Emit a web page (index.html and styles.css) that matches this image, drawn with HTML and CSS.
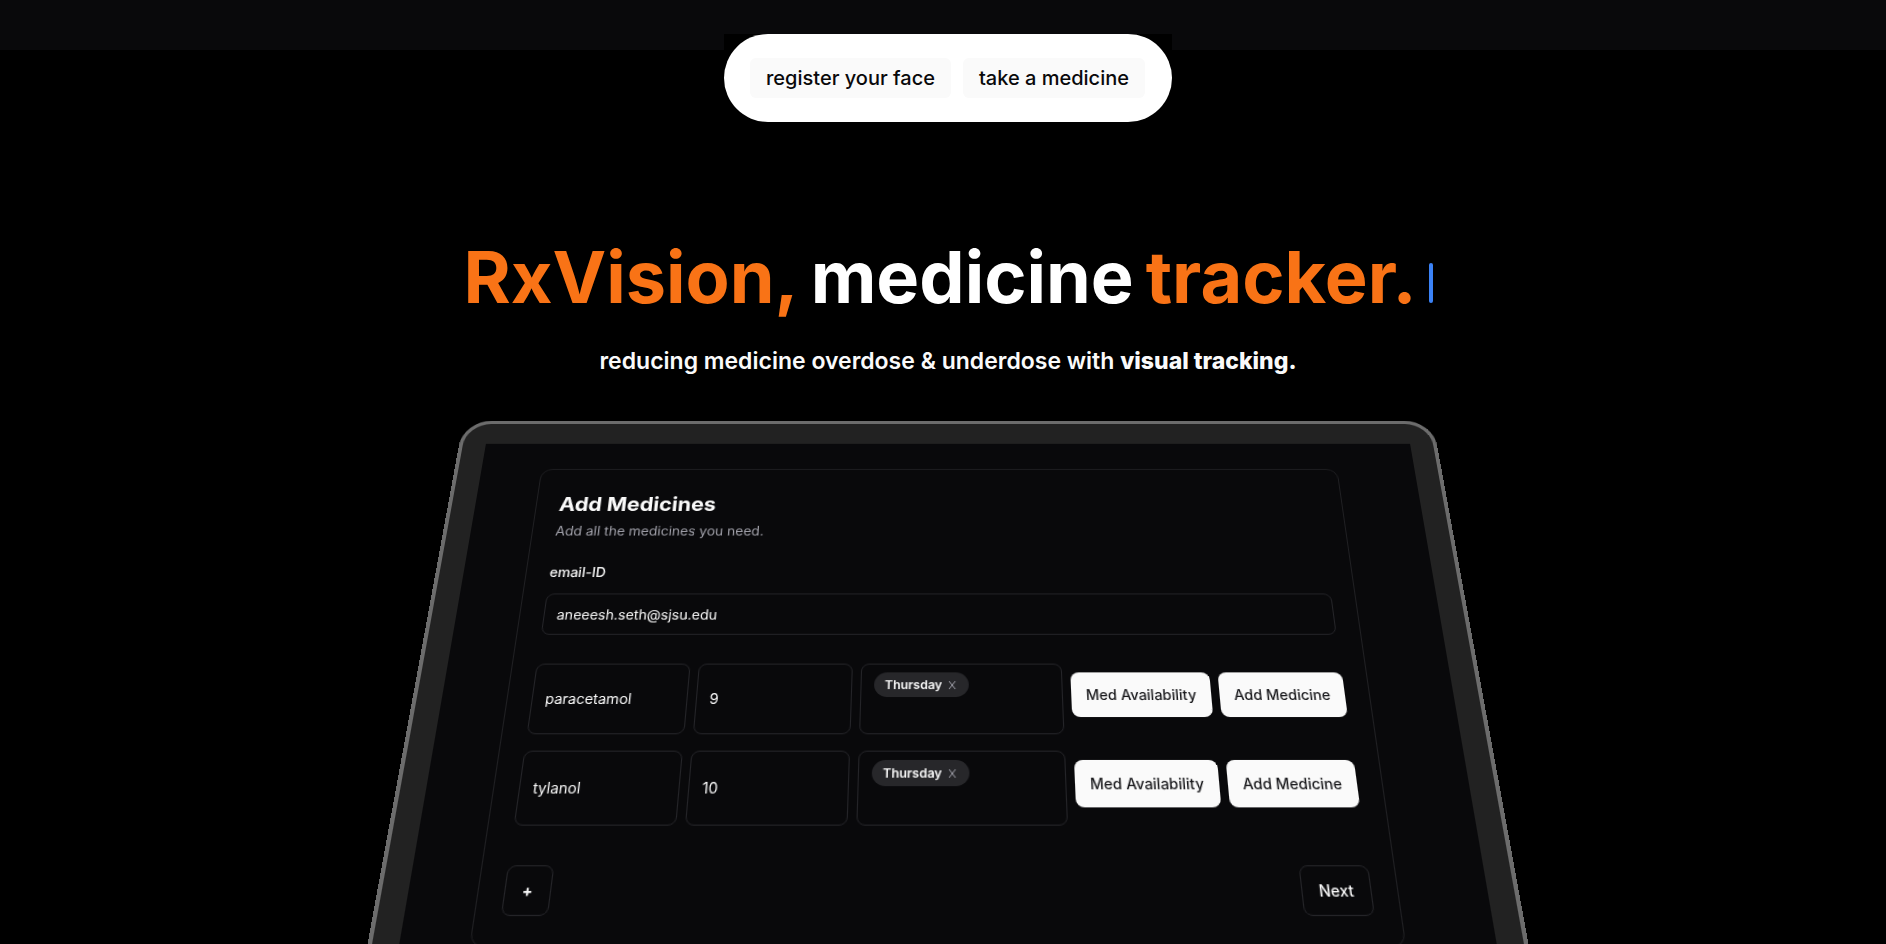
FILE: index.html
```html
<!DOCTYPE html>
<html lang="en">
<head>
  <meta charset="utf-8">
  <meta name="viewport" content="width=device-width, initial-scale=1">
  <title>RxVision</title>
  <link rel="stylesheet" href="styles.css">
</head>
<body>
  <main class="page">
    <header class="topbar">
      <nav class="nav-box" aria-label="Main">
        <div class="nav-pill">
          <button class="nav-button" type="button">register your face</button>
          <button class="nav-button" type="button">take a medicine</button>
        </div>
      </nav>
    </header>

    <section class="hero">
      <h1 class="headline"><span class="accent">RxVision,</span> <span>medicine</span> <span class="accent">tracker.</span><span class="cursor"></span></h1>
      <p class="tagline">reducing medicine overdose &amp; underdose with <strong>visual tracking.</strong></p>
    </section>

    <section class="stage">
      <div class="tablet">
        <div class="screen">
          <form class="card">
            <h2 class="card-title">Add Medicines</h2>
            <p class="card-text">Add all the medicines you need.</p>
            <label class="label" for="email">email-ID</label>
            <input class="field email" id="email" type="text" value="aneeesh.seth@sjsu.edu">
            <div class="rows">
              <div class="row">
                <input class="field" type="text" aria-label="Medicine" value="paracetamol">
                <input class="field" type="text" aria-label="Quantity" value="9">
                <div class="field days"><span class="tag">Thursday<button class="remove" type="button" aria-label="Remove Thursday"><svg viewBox="0 0 12 12" width="12" height="12"><path d="M3 2l6 8M9 2l-6 8"/></svg></button></span></div>
                <button class="solid" type="button">Med Availability</button>
                <button class="solid" type="button">Add Medicine</button>
              </div>
              <div class="row">
                <input class="field" type="text" aria-label="Medicine" value="tylanol">
                <input class="field" type="text" aria-label="Quantity" value="10">
                <div class="field days"><span class="tag">Thursday<button class="remove" type="button" aria-label="Remove Thursday"><svg viewBox="0 0 12 12" width="12" height="12"><path d="M3 2l6 8M9 2l-6 8"/></svg></button></span></div>
                <button class="solid" type="button">Med Availability</button>
                <button class="solid" type="button">Add Medicine</button>
              </div>
            </div>
            <div class="actions">
              <button class="outline plus" type="button">+</button>
              <button class="outline" type="button">Next</button>
            </div>
          </form>
        </div>
      </div>
    </section>
  </main>
</body>
</html>
```
FILE: styles.css
```css
* {
  box-sizing: border-box;
}

body {
  margin: 0;
  background: #000;
  color: #fafafa;
  font-family: Inter, "Liberation Sans", sans-serif;
}

button,
input {
  font: inherit;
  color: inherit;
}

.page {
  height: 100vh;
  overflow: hidden;
}

.topbar,
.hero,
.stage {
  padding-left: 10px;
}

.topbar {
  display: flex;
  justify-content: center;
  height: 122px;
  padding-top: 34px;
  background: linear-gradient(#09090b 50px, #000 50px);
}

.nav-box {
  background: #000;
}

.nav-pill {
  display: flex;
  gap: 12px;
  padding: 24px 27px 24px 26px;
  border-radius: 44px;
  background: #fff;
}

.nav-button {
  height: 40px;
  padding: 0 16px;
  border: 0;
  border-radius: 6px;
  background: #fafafa;
  color: #09090b;
  font-size: 20px;
  font-weight: 500;
  line-height: 28px;
}

.hero {
  display: flex;
  flex-direction: column;
  align-items: center;
  height: 268px;
  padding-top: 119px;
  text-align: center;
}

.headline {
  display: flex;
  align-items: baseline;
  gap: 12px;
  margin: 0;
  color: #fff;
  font-size: 72px;
  font-weight: 700;
  line-height: 72px;
}

.headline .accent {
  color: #f97316;
}

.cursor {
  width: 4px;
  height: 40px;
  border-radius: 2px;
  background: #3b82f6;
}

.tagline {
  margin: 32px 0 0;
  font-size: 23px;
  font-weight: 600;
  line-height: 32px;
}

.tagline strong {
  font-weight: 800;
}

.stage {
  perspective: 1000px;
  perspective-origin: calc(50% + 5px) 291px;
}

.tablet {
  width: 100%;
  max-width: 1024px;
  height: 640px;
  margin: 0 auto;
  padding: 24px;
  border: 4px solid #6c6c6c;
  border-radius: 30px;
  background: #222;
  transform: rotateX(19deg) scale(1.05);
}

.screen {
  height: 100%;
  padding: 30px 80px 0 62px;
  background: #09090b;
}

.card {
  display: flex;
  flex-direction: column;
  padding: 24px 23px 26px;
  border: 1px solid #202023;
  border-radius: 12px;
}

.card-title {
  margin: 0;
  font-size: 22px;
  font-weight: 700;
  line-height: 32px;
}

.card-text {
  margin: 5px 0 0;
  color: #a1a1aa;
  font-size: 14px;
  line-height: 20px;
}

.label {
  margin-top: 26px;
  font-size: 14px;
  font-weight: 500;
  line-height: 20px;
}

.field {
  width: 100%;
  min-width: 0;
  padding: 0 12px;
  border: 1px solid #252529;
  border-radius: 8px;
  outline: 0;
  background: transparent;
  font-size: 14px;
}

.email {
  height: 44px;
  margin-top: 13px;
}

.rows {
  display: flex;
  flex-direction: column;
  gap: 16px;
  margin-top: 30px;
}

.row {
  display: grid;
  grid-template-columns: 10fr 10fr 13fr auto auto;
  gap: 8px;
  height: 71px;
}

.days {
  padding: 8px 12px;
}

.tag {
  display: inline-flex;
  align-items: center;
  gap: 4px;
  height: 25px;
  padding: 0 10px;
  border-radius: 13px;
  background: #27272a;
  font-size: 12px;
  font-weight: 600;
}

.remove {
  display: flex;
  padding: 0;
  border: 0;
  background: none;
}

.remove svg {
  fill: none;
  stroke: #a1a1aa;
  stroke-width: 1;
}

.solid,
.outline {
  height: 45px;
  padding: 0 15px;
  border: 0;
  border-radius: 8px;
  font-size: 14px;
  font-weight: 500;
}

.solid {
  margin-top: 9px;
  padding: 0 14px;
  background: #fafafa;
  color: #18181b;
}

.outline {
  border: 1px solid #252529;
  background: transparent;
}

.plus {
  font-weight: 700;
}

.actions {
  display: flex;
  justify-content: space-between;
  margin-top: 36px;
}
```
